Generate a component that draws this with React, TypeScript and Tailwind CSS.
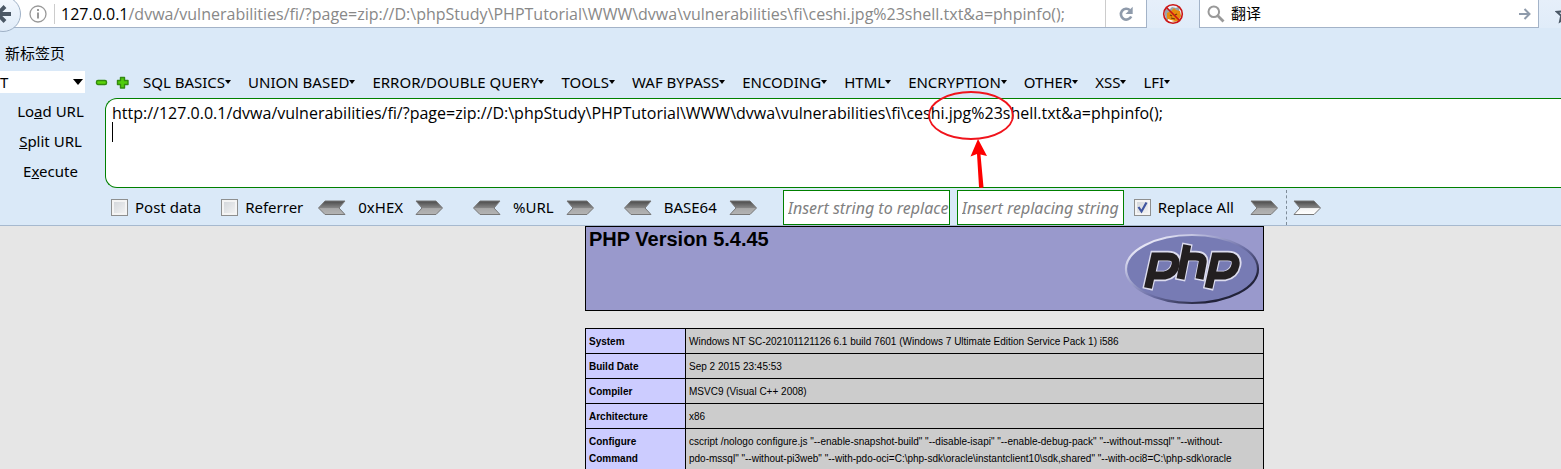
import { useState, type ReactNode } from 'react';

const HOST = '127.0.0.1';
const PATH =
  '/dvwa/vulnerabilities/fi/?page=zip://D:\\phpStudy\\PHPTutorial\\WWW\\dvwa\\vulnerabilities\\fi\\ceshi.jpg%23shell.txt&a=phpinfo();';

const MENUS = [
  'SQL BASICS',
  'UNION BASED',
  'ERROR/DOUBLE QUERY',
  'TOOLS',
  'WAF BYPASS',
  'ENCODING',
  'HTML',
  'ENCRYPTION',
  'OTHER',
  'XSS',
  'LFI',
];

const INFO: [string, string][] = [
  ['System', 'Windows NT SC-202101121126 6.1 build 7601 (Windows 7 Ultimate Edition Service Pack 1) i586'],
  ['Build Date', 'Sep 2 2015 23:45:53'],
  ['Compiler', 'MSVC9 (Visual C++ 2008)'],
  ['Architecture', 'x86'],
  [
    'Configure Command',
    'cscript /nologo configure.js "--enable-snapshot-build" "--disable-isapi" "--enable-debug-pack" "--without-mssql" "--without-\npdo-mssql" "--without-pi3web" "--with-pdo-oci=C:\\php-sdk\\oracle\\instantclient10\\sdk,shared" "--with-oci8=C:\\php-sdk\\oracle',
  ],
];

function BackButton() {
  return (
    <button type="button" aria-label="Back" className="absolute -top-1 -left-4 z-10">
      <svg width="38" height="38" viewBox="0 0 38 38">
        <defs>
          <linearGradient id="back" x1="0" y1="0" x2="0" y2="1">
            <stop offset="0" stopColor="#f4f9ff" />
            <stop offset="1" stopColor="#dfebf8" />
          </linearGradient>
        </defs>
        <circle cx="19" cy="18" r="17.5" fill="url(#back)" stroke="#9fb1c6" />
        <path d="M27 18H14M21 10.500l-7.500 7.500 7.500 7.500" fill="none" stroke="#4b5866" strokeWidth="4" />
      </svg>
    </button>
  );
}

function InfoIcon() {
  return (
    <svg width="18" height="18" viewBox="0 0 18 18" className="shrink-0" fill="none" stroke="#999">
      <circle cx="9" cy="9" r="8" strokeWidth="1.300" />
      <path d="M9 7.500v6M9 4v2" strokeWidth="2" />
    </svg>
  );
}

function ReloadIcon() {
  return (
    <svg width="16" height="16" viewBox="0 0 16 16">
      <path d="M12 4.200A5.400 5.400 0 1 0 13.200 10.500" fill="none" stroke="#8f9bab" strokeWidth="2.600" />
      <path d="M14.700 0.800v7.200H7.500z" fill="#8f9bab" />
    </svg>
  );
}

function BlockedFoxIcon() {
  return (
    <svg width="22" height="22" viewBox="0 0 22 22">
      <path d="M3 5l4 2 3-3 4 1 4-2-1 5 2 5-3 5-6 1-6-2-1-5z" fill="#9aa3a8" />
      <path d="M5 10l4-2 3-3 2 2 4 1 1 5-3 5-5 1-5-1-1-4z" fill="#e88a0c" />
      <path d="M8 12l2 1M13 12l2-1M9 15l4 1" stroke="#6d3c05" strokeWidth="1.200" />
      <path d="M6 16l3 1 4 1-4 1-3-1z" fill="#fff" />
      <circle cx="11" cy="11" r="9.300" fill="none" stroke="#cc1414" strokeWidth="1.600" />
      <path d="M4.500 4.500l13 13" stroke="#cc1414" strokeWidth="1.600" />
    </svg>
  );
}

function SearchIcon() {
  return (
    <svg width="18" height="18" viewBox="0 0 18 18" fill="none" stroke="#999" className="shrink-0">
      <circle cx="6.800" cy="6.800" r="5.300" strokeWidth="2" />
      <path d="M10.800 10.800l5.700 5.700" strokeWidth="2.800" />
    </svg>
  );
}

function Chevron({ dir, light = false }: { dir: 'left' | 'right'; light?: boolean }) {
  const id = light ? 'metal-light' : 'metal';
  return (
    <svg width="28" height="16" viewBox="0 0 28 16" className="block">
      <defs>
        <linearGradient id={id} x1="0" y1="0" x2="0" y2="1">
          <stop offset="0" stopColor="#4a4a4a" />
          <stop offset="0.500" stopColor="#858585" />
          <stop offset="0.560" stopColor={light ? '#f4f4f4' : '#a8a8a8'} />
          <stop offset="1" stopColor={light ? '#ffffff' : '#b4b4b4'} />
        </linearGradient>
      </defs>
      <path
        d={dir === 'right' ? 'M1 1h20l6.500 7-6.500 6.500H1l6-6.500z' : 'M27 1H7L0.500 8 7 14.500h20l-6-6.500z'}
        fill={`url(#${id})`}
        stroke="#777"
      />
    </svg>
  );
}

function Converter({ label }: { label: string }) {
  return (
    <div className="flex items-center gap-3">
      <button type="button" aria-label={`Decode ${label}`}>
        <Chevron dir="left" />
      </button>
      <span>{label}</span>
      <button type="button" aria-label={`Encode ${label}`}>
        <Chevron dir="right" />
      </button>
    </div>
  );
}

function Check({ id, label, initial = false }: { id: string; label: string; initial?: boolean }) {
  const [on, setOn] = useState(initial);
  return (
    <div className="flex items-center gap-[7px]">
      <span className="relative block size-[17px]">
        <input
          id={id}
          type="checkbox"
          checked={on}
          onChange={() => setOn(!on)}
          className="block size-[17px] appearance-none border border-[#8e8f8f] bg-linear-to-br from-[#cfd3d8] to-[#f6f6f6] shadow-[inset_0_0_0_2px_#f4f4f4]"
        />
        {on && (
          <svg viewBox="0 0 17 17" className="pointer-events-none absolute inset-0">
            <path d="M4.500 8l3 4.500L12.500 3.500" fill="none" stroke="#3f55a0" strokeWidth="2.200" />
          </svg>
        )}
      </span>
      <label htmlFor={id}>{label}</label>
    </div>
  );
}

function Action({ children }: { children: ReactNode }) {
  return (
    <button type="button" className="h-[30px] whitespace-nowrap">
      {children}
    </button>
  );
}

function PhpLogo() {
  return (
    <svg width="136" height="72" viewBox="0 0 136 72" role="img" aria-label="PHP" className="shrink-0">
      <defs>
        <linearGradient id="rim" x1="0" y1="0" x2="1" y2="1">
          <stop offset="0.150" stopColor="#e4e4f4" />
          <stop offset="0.350" stopColor="#a3a5cf" />
          <stop offset="0.550" stopColor="#6a6da4" />
          <stop offset="0.800" stopColor="#22233a" />
        </linearGradient>
      </defs>
      <ellipse cx="68" cy="36" rx="66" ry="34" fill="#777bb4" stroke="url(#rim)" strokeWidth="2.200" />
      <g fill="none" strokeLinejoin="miter">
        <g stroke="#dcdcee" strokeWidth="10.500">
          <path d="M23.500 56.500L31 23H44Q54 23 52 32T41 43H29" />
          <path d="M63.500 10.500L56 47.500M61 23H72Q80.500 23 79 30L75.500 47.500" />
          <path d="M84 56.500L91.500 23H104Q114 23 112 32T101 43H89" />
        </g>
        <g stroke="#231f20" strokeWidth="8">
          <path d="M24 55L31 23.500H43.500Q53 23.500 51.500 32T40.500 42.500H29" />
          <path d="M63.200 12L56.500 46M61 23.500H71.500Q80 23.500 78.500 30L75.500 46" />
          <path d="M84.500 55L91.500 23.500H103.500Q113 23.500 111.500 32T100.500 42.500H89" />
        </g>
      </g>
    </svg>
  );
}

function NavBar() {
  return (
    <nav className="relative flex h-7 bg-linear-to-b from-[#e6effa] to-[#e0ecf9]">
      <BackButton />
      <div className="flex min-w-0 flex-1 items-center border-r border-b border-[#a3b3c8] bg-white pl-[29px]">
        <InfoIcon />
        <span className="ml-[7px] h-5 w-px shrink-0 bg-[#ccc]" />
        <div className="min-w-0 flex-1 overflow-hidden pl-[6px] font-['Open_Sans',sans-serif] text-base whitespace-nowrap text-[#888]">
          <span className="text-black">{HOST}</span>
          {PATH}
        </div>
        <span className="h-full w-px bg-[#ccc]" />
        <button type="button" aria-label="Reload" className="flex w-10 justify-center">
          <ReloadIcon />
        </button>
      </div>
      <button type="button" aria-label="Proxy disabled" className="flex w-[52px] items-center justify-center">
        <BlockedFoxIcon />
      </button>
      <form className="flex w-[340px] items-center gap-[6px] border-x border-b border-[#a3b3c8] bg-white px-[7px]">
        <SearchIcon />
        <input aria-label="Search" defaultValue="翻译" className="min-w-0 flex-1 bg-transparent outline-none" />
        <button type="button" aria-label="Go">
          <svg width="12" height="12" viewBox="0 0 12 12" fill="none" stroke="#8f9bab" strokeWidth="2">
            <path d="M0 6h10M5.500 1l5 5-5 5" />
          </svg>
        </button>
      </form>
      <button type="button" aria-label="Bookmark" className="flex w-[22px] items-center overflow-hidden pl-4">
        <svg width="20" height="20" viewBox="0 0 20 20" className="shrink-0" fill="none" stroke="#4b5866" strokeWidth="2">
          <path d="M10 2l2.400 5.300 5.600.6-4.200 3.900 1.200 5.700-5-2.900-5 2.900 1.200-5.700L2 7.900l5.600-.6z" />
        </svg>
      </button>
    </nav>
  );
}

function Toolbar() {
  return (
    <div className="flex h-[22px] items-center">
      <div className="relative h-full w-[85px] shrink-0 bg-white">
        <select aria-label="Database" className="block h-full w-full appearance-none bg-transparent outline-none">
          <option>T</option>
        </select>
        <svg width="10" height="6" className="pointer-events-none absolute top-2 right-[2px]">
          <path d="M0 0h10L5 6z" />
        </svg>
      </div>
      <div className="flex shrink-0 items-center gap-2 pl-[10px]">
        <button type="button" aria-label="Remove">
          <svg width="13" height="13" viewBox="0 0 13 13" className="block">
            <rect x="1.500" y="4.500" width="10" height="4" rx="1.500" fill="#5cd40a" stroke="#338a10" strokeWidth="1.400" />
          </svg>
        </button>
        <button type="button" aria-label="Add">
          <svg width="13" height="13" viewBox="0 0 13 13" className="block">
            <path
              d="M4.500 1.500h4V4.500H12v4H8.500V12H4.500V8.500H1.500V4.500H4.500z"
              fill="#50cc0a"
              stroke="#338a10"
              strokeWidth="1.400"
              strokeLinejoin="round"
            />
          </svg>
        </button>
      </div>
      <div className="flex gap-[17px] pl-[14px]">
        {MENUS.map((m) => (
          <button key={m} type="button" className="flex items-center whitespace-nowrap">
            {m}
            <svg width="6" height="4" className="block">
              <path d="M0 0h6L3 4z" />
            </svg>
          </button>
        ))}
      </div>
    </div>
  );
}

function Editor() {
  return (
    <div className="flex">
      <div className="flex w-[101px] shrink-0 flex-col items-center">
        <div className="-mt-[2px] flex flex-col">
          <Action>
            Lo<u>a</u>d URL
          </Action>
          <Action>
            <u>S</u>plit URL
          </Action>
          <Action>
            E<u>x</u>ecute
          </Action>
        </div>
      </div>
      <div className="relative ml-1 min-w-0 flex-1">
        <textarea
          aria-label="URL"
          spellCheck={false}
          defaultValue={`http://${HOST}${PATH}\n`}
          className="block h-[90px] w-full resize-none overflow-hidden rounded-l-xl border border-r-0 border-[#008000] bg-white px-[6px] pt-1 font-['Open_Sans',sans-serif] text-base leading-5 outline-none"
        />
        <span className="absolute top-6 left-[7px] h-5 w-px bg-black" />
        <svg width="90" height="102" viewBox="0 0 90 102" className="pointer-events-none absolute -top-2 left-[822px]">
          <ellipse cx="44" cy="25.500" rx="42" ry="23.500" fill="none" stroke="#f0141c" strokeWidth="1.800" />
          <path d="M51 49l9 17-6.500-1.500L56.500 97q-2 2-4.500 0L50 64l-6.500 2.500z" fill="#fe0000" />
        </svg>
      </div>
    </div>
  );
}

const FIELD =
  'h-[35px] w-[167px] border border-[#008000] bg-white pl-1 text-base italic text-black outline-none placeholder:text-[#808080]';

function Options() {
  return (
    <div className="flex h-[38px] items-center border-b border-[#a6b9cf] pt-[2px] pl-[111px] whitespace-nowrap">
      <div className="flex gap-5">
        <Check id="post" label="Post data" />
        <Check id="referrer" label="Referrer" />
      </div>
      <div className="flex gap-[30px] pl-[15px]">
        <Converter label="0xHEX" />
        <Converter label="%URL" />
        <Converter label="BASE64" />
      </div>
      <div className="flex gap-[7px] pl-[26px]">
        <input aria-label="Insert string to replace" placeholder="Insert string to replace" className={FIELD} />
        <input aria-label="Insert replacing string" placeholder="Insert replacing string" className={FIELD} />
      </div>
      <div className="flex items-center gap-4 pl-[10px]">
        <Check id="all" label="Replace All" initial />
        <button type="button" aria-label="Replace">
          <Chevron dir="right" />
        </button>
      </div>
      <span className="ml-2 h-full border-l border-dashed border-[#7f8c99]" />
      <button type="button" aria-label="Next" className="ml-[6px]">
        <Chevron dir="right" light />
      </button>
    </div>
  );
}

export default function App() {
  return (
    <div className="flex h-screen flex-col overflow-hidden bg-[#e6e6e6] font-['Noto_Sans','Noto_Sans_CJK_SC',sans-serif] text-[15px] text-black">
      <header className="shrink-0 bg-[#dae9f8]">
        <NavBar />
        <div className="flex h-[43px] items-center pt-[7px] pl-[5px]">
          <a href="#new">新标签页</a>
        </div>
        <Toolbar />
        <div className="pt-[5px]">
          <Editor />
        </div>
        <Options />
      </header>
      <main className="min-h-0 flex-1 overflow-hidden pl-[585px] font-['Liberation_Sans',sans-serif]">
        <div className="w-full max-w-[679px]">
          <div className="flex h-[85px] justify-between border border-black bg-[#9999cc] pr-[3px] pl-[3px]">
            <h1 className="text-xl leading-6 font-bold">PHP Version 5.4.45</h1>
            <div className="pt-1.5">
              <PhpLogo />
            </div>
          </div>
          <table className="mt-[17px] w-full table-fixed border-collapse text-[10px] leading-[17px]">
            <tbody>
              {INFO.map(([k, v]) => (
                <tr key={k}>
                  <th className="w-[100px] border border-black bg-[#ccccff] px-[3px] pt-1 pb-[3px] text-left align-top font-bold">
                    {k}
                  </th>
                  <td className="border border-black bg-[#cccccc] px-[3px] pt-1 pb-[3px] align-top whitespace-pre-line">
                    {v}
                  </td>
                </tr>
              ))}
            </tbody>
          </table>
        </div>
      </main>
    </div>
  );
}
